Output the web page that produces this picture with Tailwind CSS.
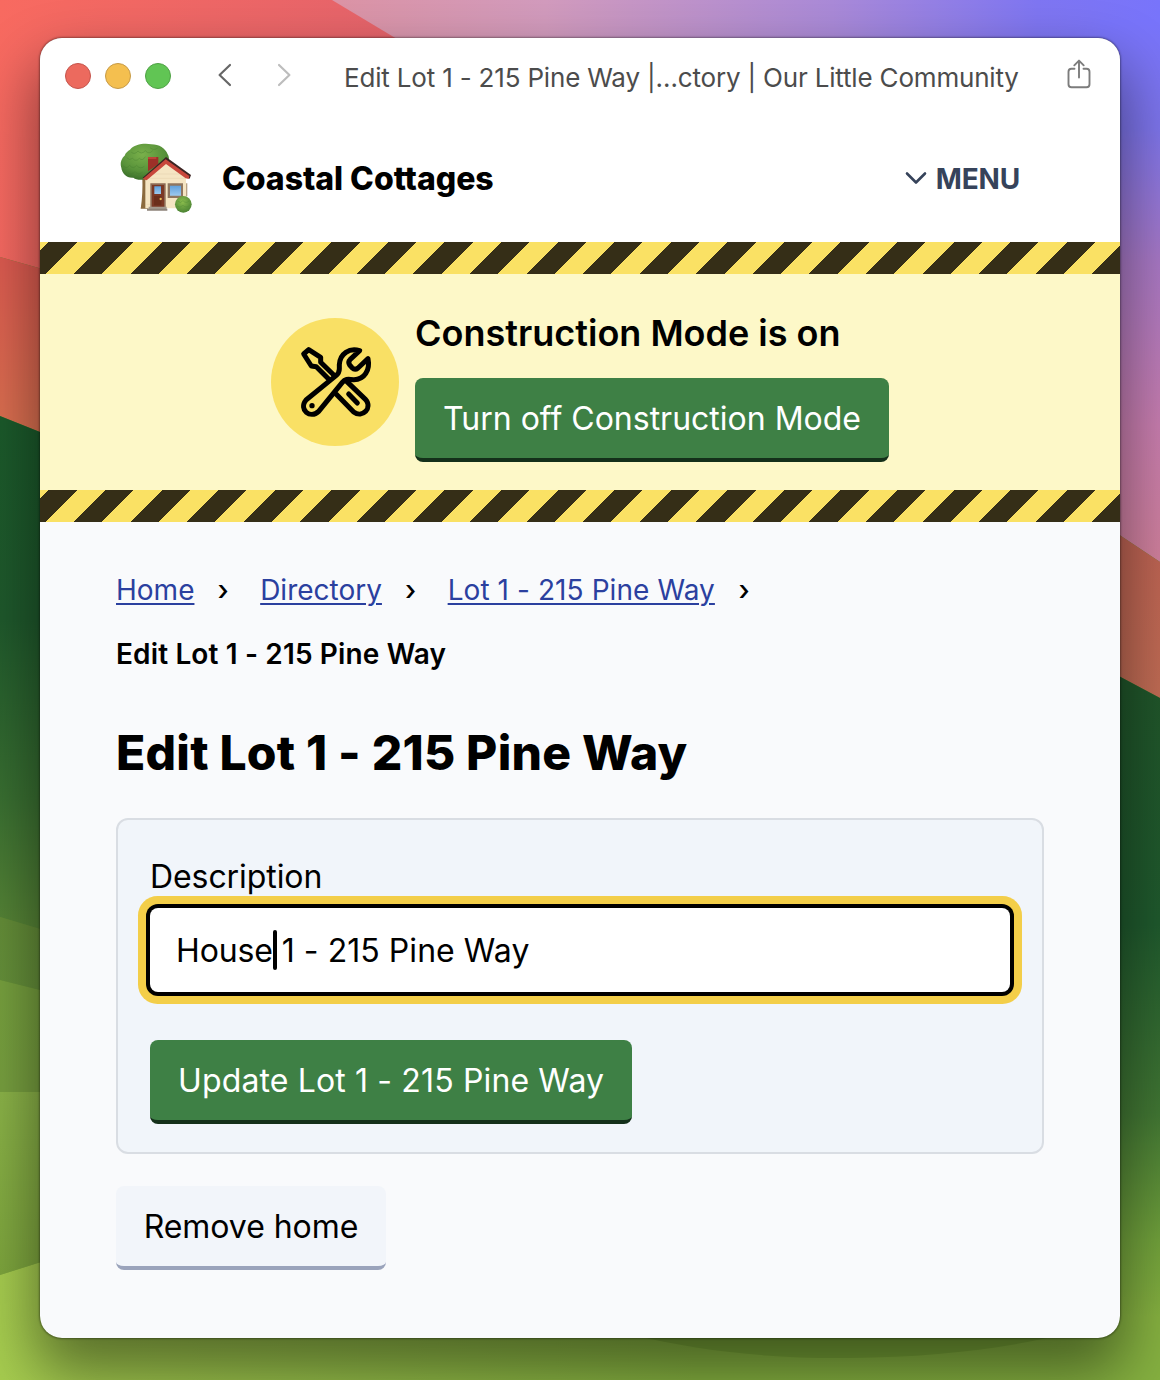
<!DOCTYPE html>
<html lang="en">
<head>
<meta charset="utf-8">
<title>Edit Lot 1 - 215 Pine Way | Directory | Our Little Community</title>
<script src="https://cdn.jsdelivr.net/npm/@tailwindcss/browser@4"></script>
</head>
<body class="relative h-[1380px] w-[1160px] overflow-hidden bg-[#5f8a30] font-['Inter',sans-serif] text-black">

<!-- Desktop wallpaper -->
<svg class="absolute inset-0" width="1160" height="1380" viewBox="0 0 1160 1380" aria-hidden="true">
  <defs>
    <linearGradient id="coral" x1="0" y1="0" x2="400" y2="60" gradientUnits="userSpaceOnUse"><stop offset="0" stop-color="#f86a60"/><stop offset="1" stop-color="#e5646c"/></linearGradient>
    <linearGradient id="coral2" x1="0" y1="257" x2="0" y2="430" gradientUnits="userSpaceOnUse"><stop offset="0" stop-color="#dc5a50"/><stop offset="1" stop-color="#db7050"/></linearGradient>
    <linearGradient id="sky" x1="340" y1="0" x2="1160" y2="0" gradientUnits="userSpaceOnUse"><stop offset="0" stop-color="#dc94a6"/><stop offset=".25" stop-color="#d29bbd"/><stop offset=".6" stop-color="#aa8ad8"/><stop offset=".85" stop-color="#7f76f2"/><stop offset="1" stop-color="#7874fb"/></linearGradient>
    <linearGradient id="side" x1="0" y1="20" x2="0" y2="560" gradientUnits="userSpaceOnUse"><stop offset="0" stop-color="#7874fb"/><stop offset=".2" stop-color="#7d74ea"/><stop offset=".45" stop-color="#a878c4"/><stop offset=".75" stop-color="#c77dae"/><stop offset="1" stop-color="#d0809c"/></linearGradient>
    <linearGradient id="rust" x1="0" y1="540" x2="0" y2="700" gradientUnits="userSpaceOnUse"><stop offset="0" stop-color="#bd6353"/><stop offset="1" stop-color="#c06c54"/></linearGradient>
    <linearGradient id="forest" x1="0" y1="416" x2="0" y2="925" gradientUnits="userSpaceOnUse"><stop offset="0" stop-color="#1b5a2b"/><stop offset=".4" stop-color="#1f592c"/><stop offset=".75" stop-color="#396f31"/><stop offset="1" stop-color="#568436"/></linearGradient>
    <linearGradient id="forestR" x1="0" y1="680" x2="0" y2="1380" gradientUnits="userSpaceOnUse"><stop offset="0" stop-color="#20552a"/><stop offset=".35" stop-color="#1f592d"/><stop offset=".62" stop-color="#417633"/><stop offset=".8" stop-color="#70a03b"/><stop offset=".91" stop-color="#85b040"/><stop offset="1" stop-color="#85b040"/></linearGradient>
    <linearGradient id="g1" x1="0" y1="0" x2="0" y2="1"><stop offset="0" stop-color="#648d38"/><stop offset="1" stop-color="#65903a"/></linearGradient>
    <linearGradient id="g2" x1="0" y1="0" x2="0" y2="1"><stop offset="0" stop-color="#76a03e"/><stop offset="1" stop-color="#779f3f"/></linearGradient>
    <linearGradient id="g3" x1="0" y1="0" x2="0" y2="1"><stop offset="0" stop-color="#8bb348"/><stop offset="1" stop-color="#7da53d"/></linearGradient>
    <linearGradient id="g4" x1="0" y1="0" x2="1160" y2="0" gradientUnits="userSpaceOnUse"><stop offset="0" stop-color="#a6cc4f"/><stop offset=".25" stop-color="#98c14a"/><stop offset=".6" stop-color="#84b03f"/><stop offset="1" stop-color="#85b040"/></linearGradient>
  </defs>
  <path fill="url(#coral)" d="M0 0H420V100L60 274L0 257Z"/>
  <path fill="url(#sky)" d="M332 0H1160V120H532Z"/>
  <path fill="url(#side)" d="M1100 20H1160V562L1100 522Z"/>
  <path fill="url(#coral2)" d="M0 257L60 274V440L0 416Z"/>
  <path fill="url(#rust)" d="M1100 522L1160 562V698L1100 666Z"/>
  <path fill="url(#forest)" d="M0 416L60 440V935L0 917Z"/>
  <path fill="url(#forestR)" d="M1100 666L1160 698V1380H1100Z"/>
  <path fill="url(#g1)" d="M0 917L60 935V995L0 980Z"/>
  <path fill="url(#g2)" d="M0 980L60 995V1092H0Z"/>
  <path fill="url(#g3)" d="M0 1092H60V1256L0 1275Z"/>
  <path fill="url(#g4)" d="M0 1275L60 1256V1320H1160V1380H0Z"/>
  <path fill="#76a136" d="M630 1334C700 1352 780 1359 850 1358C950 1357 1040 1345 1110 1320H600Z"/>
</svg>

<!-- Browser window -->
<div class="relative mx-[40px] mt-[38px] flex h-[1300px] flex-col overflow-hidden rounded-[22px] bg-[#f9fafc]">

  <!-- Title bar -->
  <div class="flex h-[76px] shrink-0 items-center bg-white pl-[25px]">
    <div class="flex gap-[14px]">
      <span class="size-[26px] rounded-full border border-[#c5544b] bg-[#ec6a5e]"></span>
      <span class="size-[26px] rounded-full border border-[#c79a45] bg-[#f4bf4f]"></span>
      <span class="size-[26px] rounded-full border border-[#4ea144] bg-[#61c554]"></span>
    </div>
    <svg class="mb-[2px] ml-[45px]" width="20" height="26" viewBox="0 0 20 26" fill="none" stroke="#676767" stroke-width="2.2" stroke-linecap="round" stroke-linejoin="round"><path d="M14 3L3.600 13L14 23"/></svg>
    <svg class="mb-[2px] ml-[39px]" width="20" height="26" viewBox="0 0 20 26" fill="none" stroke="#bdbdbd" stroke-width="2.2" stroke-linecap="round" stroke-linejoin="round"><path d="M4 3L14.400 13L4 23"/></svg>
    <div class="ml-[49px] w-[680px] pt-[3px] text-[26px] leading-[32px] tracking-[-0.18px] whitespace-nowrap text-[#4c4c4c]">Edit Lot 1 - 215 Pine Way |…ctory | Our Little Community</div>
    <svg class="mb-[2px] ml-[41px]" width="28" height="34" viewBox="0 0 28 34" fill="none" stroke="#7c7c7c" stroke-width="1.9" stroke-linecap="round" stroke-linejoin="round"><path d="M9.5 10.8H6.5A3 3 0 0 0 3.500 13.800V26.200A3 3 0 0 0 6.500 29.200H21.500A3 3 0 0 0 24.500 26.200V13.800A3 3 0 0 0 21.500 10.800H18.500M14 19.500V3M9.300 7.300L14 2.600L18.700 7.300"/></svg>
  </div>

  <!-- Site header -->
  <header class="flex h-[128px] shrink-0 items-center bg-white pr-[100px] pl-[80px]">
    <svg class="mt-[2px]" width="72" height="72" viewBox="30 24 216 216">
      <defs>
        <radialGradient id="tree" cx=".45" cy=".3" r=".7"><stop offset="0" stop-color="#79b04a"/><stop offset=".65" stop-color="#58923a"/><stop offset="1" stop-color="#3b702b"/></radialGradient>
        <radialGradient id="bush" cx=".45" cy=".35" r=".65"><stop offset="0" stop-color="#8bbd4d"/><stop offset="1" stop-color="#4c8434"/></radialGradient>
        <linearGradient id="glass" x1="0" y1="0" x2="0" y2="1"><stop offset="0" stop-color="#5fa0dc"/><stop offset="1" stop-color="#9cc9ee"/></linearGradient>
      </defs>
      <path fill="#8b6a3e" d="M97 126H116V221H92C97 190 98 160 97 126Z"/>
      <path fill="url(#tree)" d="M60 44C72 28 104 23 124 28C148 28 166 40 173 58C181 70 176 90 164 98L108 132C92 137 78 134 70 128C50 130 36 115 34 98C28 82 38 66 44 62C46 54 54 47 60 44Z"/>
      <path fill="none" stroke="#427b2d" stroke-width="2.500" opacity=".45" d="M50 68Q58 78 68 70Q77 82 88 70Q97 80 106 65M64 52Q74 60 84 48Q94 60 106 47Q117 60 128 47M40 93Q50 103 59 91Q69 104 80 91Q90 104 103 94M54 113Q65 121 75 110Q86 122 98 111M120 38Q132 48 143 39"/>
      <path fill="#9d3028" d="M114 66H145V88L114 109Z"/><path fill="#bc4438" d="M114 66H139V72H114Z"/>
      <path fill="#b7a184" d="M226 145H232V184H226Z"/>
      <path fill="#f5e5c3" d="M106 128L168 80L228 124V220H106Z"/>
      <path stroke="#e2cfab" stroke-width="1.500" d="M124 117H212M110 130H226M110 208H124"/>
      <path fill="#3b2423" d="M168 66L243 120L239 131L228 127L168 82L108 133L98 128Z"/>
      <path fill="#c8473c" d="M167 73L238 123L236 132L227 130L168 87L110 136L98 132Z"/>
      <path fill="#8c6a54" d="M121 145H167V219H121Z"/><path fill="#7b3824" d="M126 150H162V216H126Z"/>
      <path fill="url(#glass)" d="M133 154H153V177H133Z"/><path fill="#632917" d="M132 183H154V211H132Z" opacity=".65"/>
      <circle cx="152" cy="192" r="3.500" fill="#e8bd57"/>
      <path fill="#8f765f" d="M173 145H219V189H173Z"/><path fill="url(#glass)" d="M180 152H213V182H180Z"/>
      <path fill="#a59a8f" d="M116 215H170V222H116Z"/><path fill="#8c8279" d="M111 221H172V227H111Z"/>
      <circle cx="220" cy="208" r="25" fill="url(#bush)"/>
      <path fill="none" stroke="#538c35" stroke-width="2" opacity=".7" d="M204 199Q211 207 219 197Q228 207 237 198M201 213Q210 221 219 211Q229 221 239 211"/>
    </svg>
    <span class="ml-[30px] pt-[2px] text-[32px] leading-[40px] font-extrabold tracking-[-0.03px]">Coastal Cottages</span>
    <span class="ml-auto flex items-center gap-[9px] text-[#36435a]">
      <svg width="22" height="16" viewBox="0 0 22 16" fill="none" stroke="currentColor" stroke-width="2.600" stroke-linecap="round" stroke-linejoin="round"><path d="M2 3.500L11 12.500L20 3.500"/></svg>
      <span class="pt-px text-[28px] leading-[36px] font-bold tracking-[-0.2px]">MENU</span>
    </span>
  </header>

  <!-- Construction banner -->
  <div class="h-[32px] shrink-0 bg-[repeating-linear-gradient(-45deg,#352e17_0px,#352e17_20px,#fae164_20px,#fae164_40px)]"></div>
  <section class="flex h-[216px] shrink-0 items-center justify-center gap-4 bg-[#fdf8c8]">
    <div class="flex size-[128px] items-center justify-center rounded-full bg-[#f9e065]">
      <svg width="128" height="128" viewBox="33 54 384 384" fill="none" stroke="#000" stroke-width="15" stroke-linecap="round" stroke-linejoin="round">
        <path d="M222 226L182 187V172L146 149L131 162L154 198L169 200L208 239"/>
        <path d="M260 244L317 299C338 323 308 356 281 336L229 283"/>
        <path d="M266 282L292 309"/>
        <path d="M138 300L228 227C235 221 238 216 238 207V194C240 160 268 143 299 152L270 179C265 184 266 190 269 195L276 203C282 209 288 209 294 204L324 176C331 209 314 240 280 239C262 236 255 237 247 247L176 334C151 358 115 329 138 300Z"/>
        <circle cx="156" cy="317" r="8" fill="#000" stroke="none"/>
      </svg>
    </div>
    <div class="flex h-[160px] flex-col justify-between">
      <h2 class="pt-[7px] text-[36px] leading-[48px] font-semibold">Construction Mode is on</h2>
      <button class="h-[84px] rounded-[8px] border-b-4 border-[#14301a] bg-[#3e8045] px-[28px] pt-[2px] text-[32px] leading-[40px] whitespace-nowrap text-white">Turn off Construction Mode</button>
    </div>
  </section>
  <div class="h-[32px] shrink-0 bg-[repeating-linear-gradient(-45deg,#352e17_0px,#352e17_20px,#fae164_20px,#fae164_40px)]"></div>

  <!-- Page content -->
  <main class="flex flex-col items-start px-[76px] pt-[36px]">
    <nav class="text-[28px] leading-[64px]">
      <div class="flex text-[#2b409f]">
        <a class="underline decoration-2 underline-offset-3">Home</a>
        <span class="mr-[31.500px] ml-[23px] font-medium text-black">›</span>
        <a class="underline decoration-2 underline-offset-3">Directory</a>
        <span class="mr-[31.500px] ml-[23px] font-medium text-black">›</span>
        <a class="tracking-[0.08px] underline decoration-2 underline-offset-3">Lot 1 - 215 Pine Way</a>
        <span class="ml-[23.500px] font-medium text-black">›</span>
      </div>
      <div class="font-semibold tracking-[0.14px]">Edit Lot 1 - 215 Pine Way</div>
    </nav>
    <h1 class="mt-[37px] text-[48px] leading-[60px] font-extrabold tracking-[0.22px]">Edit Lot 1 - 215 Pine Way</h1>

    <form class="mt-[35px] flex h-[336px] w-full flex-col items-start rounded-[12px] border-2 border-[#d9dde3] bg-[#f1f5fa] px-8 pt-8">
      <label class="h-[48px] pt-px text-[32px] leading-[48px] tracking-[-0.08px]">Description</label>
      <div class="mt-2 flex h-[84px] w-full items-center rounded-[8px] bg-white px-[26px] pt-[2px] text-[32px] leading-[40px] whitespace-pre shadow-[0_0_0_4px_#000,0_0_0_12px_#f3ce49]"><span class="tracking-[-0.15px]">House</span><span class="relative tracking-[0.05px]"><span class="absolute -top-px left-0 h-[40px] w-[4px] rounded-full bg-black"></span> 1 - 215 Pine Way</span></div>
      <button class="mt-[48px] h-[84px] rounded-[8px] border-b-4 border-[#14301a] bg-[#3e8045] px-[28px] pt-[2px] text-[32px] leading-[40px] tracking-[0.14px] whitespace-nowrap text-white">Update Lot 1 - 215 Pine Way</button>
    </form>

    <button class="mt-[32px] h-[84px] w-[270px] rounded-[8px] border-b-4 border-[#9aa3bb] bg-[#f2f5fa] pt-[2px] text-[32px] leading-[40px] tracking-[-0.05px]">Remove home</button>
  </main>
</div>

<!-- Window shadow, cast outside the frame only -->
<div class="pointer-events-none absolute top-[38px] left-[40px] h-[1300px] w-[1080px] rounded-[22px] shadow-[0_0_2px_1px_rgba(0,0,0,0.35),0_30px_60px_4px_rgba(0,0,0,0.45)]"></div>
</body>
</html>
